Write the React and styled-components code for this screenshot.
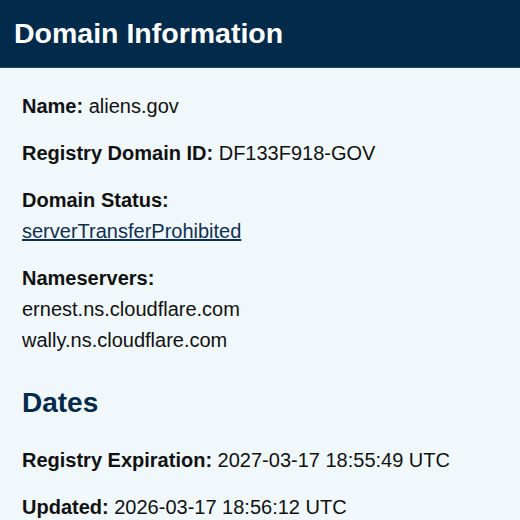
import React from "react";
import styled, { createGlobalStyle } from "styled-components";

const Global = createGlobalStyle`
  html, body { margin: 0; padding: 0; background: #f0f8fc; }
  body { font-family: "Liberation Sans", Arial, sans-serif; color: #111; }
`;

const Page = styled.div`
  width: 520px;
  min-height: 520px;
  background: #f0f8fc;
`;

const Header = styled.header`
  height: 67px;
  background: #012a4b;
  border-bottom: 1px solid #2a4a66;
  display: flex;
  align-items: center;
  padding: 0 14px;
`;

const Title = styled.h1`
  margin: 0;
  color: #fff;
  font-size: 28.5px;
  font-weight: 700;
`;

const Content = styled.main`
  padding: 23px 22px 0;
`;

const Field = styled.div`
  font-size: 20px;
  line-height: 31px;
  margin-bottom: 16px;
`;

const Label = styled.strong`
  font-weight: 700;
`;

const Line = styled.div``;

const Link = styled.a`
  color: #0f2f52;
  text-decoration: underline;
`;

const Section = styled.h2`
  margin: 32px 0 27px;
  color: #012a4b;
  font-size: 28px;
  line-height: 30px;
  font-weight: 700;
`;

export default function App() {
  return (
    <Page>
      <Global />
      <Header>
        <Title>Domain Information</Title>
      </Header>
      <Content>
        <Field>
          <Label>Name:</Label> aliens.gov
        </Field>
        <Field>
          <Label>Registry Domain ID:</Label> DF133F918-GOV
        </Field>
        <Field>
          <Line><Label>Domain Status:</Label></Line>
          <Line><Link href="#">serverTransferProhibited</Link></Line>
        </Field>
        <Field>
          <Line><Label>Nameservers:</Label></Line>
          <Line>ernest.ns.cloudflare.com</Line>
          <Line>wally.ns.cloudflare.com</Line>
        </Field>
        <Section>Dates</Section>
        <Field>
          <Label>Registry Expiration:</Label> 2027-03-17 18:55:49 UTC
        </Field>
        <Field>
          <Label>Updated:</Label> 2026-03-17 18:56:12 UTC
        </Field>
      </Content>
    </Page>
  );
}
